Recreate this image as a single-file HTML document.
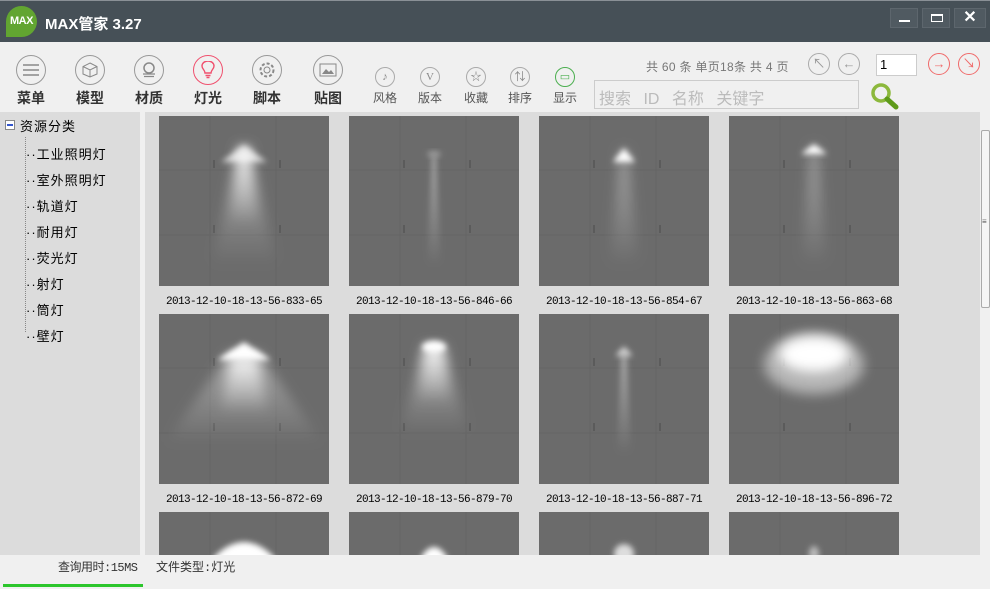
<!DOCTYPE html>
<html><head><meta charset="utf-8">
<style>
*{margin:0;padding:0;box-sizing:border-box}
html,body{width:990px;height:589px;overflow:hidden}
body{background:#f0f0f0;font-family:"Liberation Sans","Noto Sans CJK SC",sans-serif;position:relative}
.title{position:absolute;left:0;top:0;width:990px;height:42px;background:#465057;border-top:1px solid #8a9096}
.logo{position:absolute;left:6px;top:5px;width:31px;height:31px;border-radius:50% 50% 50% 0;background:#62a531;color:#fff;font-weight:bold;font-size:11px;line-height:31px;text-align:center;letter-spacing:-.5px}
.ttext{position:absolute;left:45px;top:12px;color:#fff;font-size:15px;font-weight:bold}
.wb{position:absolute;top:7px;width:28px;height:20px;background:#505a61;border:1px solid #5d666d}
.tool{position:absolute;text-align:center;font-size:14px;font-weight:bold;color:#333}
.tool .c{width:30px;height:30px;border:1.5px solid #999;border-radius:50%;margin:0 auto 3px;display:flex;align-items:center;justify-content:center}
.st{position:absolute;text-align:center;font-size:12px;color:#555}
.st .c{width:20px;height:20px;border:1px solid #aaa;border-radius:50%;margin:0 auto 2px;font-size:11px;line-height:18px;color:#888}
.nav{position:absolute;top:53px;width:22px;height:22px;border:1px solid #aaa;border-radius:50%;font-size:13px;line-height:19px;text-align:center;color:#999}
.left{position:absolute;left:0;top:112px;width:140px;height:443px;background:#dcdcdc}
.tree{position:absolute;font-size:13px;color:#000;font-family:"Liberation Sans","WenQuanYi Zen Hei",sans-serif;letter-spacing:1px}
.main{position:absolute;left:145px;top:112px;width:835px;height:443px;background:#dcdcdc;overflow:hidden}
.th{position:absolute;width:170px;height:170px}
.lb{position:absolute;width:190px;text-align:center;font-size:11px;font-family:"Liberation Mono",monospace;color:#000;letter-spacing:-.6px}
.sb{position:absolute;left:980px;top:112px;width:10px;height:443px;background:#f0f0f0}
</style></head><body>
<svg width="0" height="0" style="position:absolute;left:0;top:0">
<defs>
<filter id="b3" x="-50%" y="-50%" width="200%" height="200%"><feGaussianBlur stdDeviation="3"/></filter>
<filter id="b6" x="-50%" y="-50%" width="200%" height="200%"><feGaussianBlur stdDeviation="6"/></filter>
<linearGradient id="cg" x1="0" y1="0" x2="0" y2="1"><stop offset="0" stop-color="#fff" stop-opacity=".9"/><stop offset="1" stop-color="#fff" stop-opacity="0"/></linearGradient>
<linearGradient id="cf" x1="0" y1="0" x2="0" y2="1"><stop offset="0" stop-color="#fff" stop-opacity=".4"/><stop offset="1" stop-color="#fff" stop-opacity="0"/></linearGradient>
<g id="grid"><rect width="170" height="170" fill="#6b6b6b"/><path d="M0 54H170M0 119H170M51 0V170M117 0V170" stroke="#646464" stroke-width="1"/><path d="M55 44v8M121 44v8M55 109v8M121 109v8" stroke="#444" stroke-width=".8"/></g>
</defs></svg>

<div class="title">
<div class="logo">MAX</div>
<div class="ttext">MAX管家 3.27</div>
<div class="wb" style="left:890px"><div style="position:absolute;left:8px;top:11px;width:11px;height:2px;background:#fff"></div></div>
<div class="wb" style="left:922px"><div style="position:absolute;left:8px;top:5px;width:12px;height:8px;border:1.5px solid #fff;border-top-width:2.5px"></div></div>
<div class="wb" style="left:954px;width:32px;color:#fff;font-size:16px;text-align:center;line-height:18px;font-weight:bold">✕</div>
</div>

<div class="tool" style="left:14px;top:55px;width:34px"><div class="c"><svg width="16" height="12"><path d="M0 1H16M0 6H16M0 11H16" stroke="#888" stroke-width="1.5"/></svg></div>菜单</div>
<div class="tool" style="left:73px;top:55px;width:34px"><div class="c"><svg width="16" height="16"><path d="M8 1L15 4.5V12L8 15L1 12V4.5ZM1 4.5L8 8L15 4.5M8 8V15" stroke="#888" fill="none"/></svg></div>模型</div>
<div class="tool" style="left:132px;top:55px;width:34px"><div class="c"><svg width="16" height="16"><circle cx="8" cy="6" r="5" stroke="#888" fill="none" stroke-width="1.5"/><path d="M2 12H14M3 14.5H13" stroke="#888" stroke-width="1.3"/></svg></div>材质</div>
<div class="tool" style="left:191px;top:55px;width:34px"><div class="c" style="border-color:#f0506e"><svg width="14" height="18"><path d="M4 12C4 9 1 8 1 5A6 5 0 0 1 13 5C13 8 10 9 10 12ZM4.5 14.5H9.5M5.5 16.5H8.5" stroke="#f0506e" fill="none" stroke-width="1.4"/></svg></div>灯光</div>
<div class="tool" style="left:250px;top:55px;width:34px"><div class="c"><svg width="18" height="18"><circle cx="9" cy="9" r="3" stroke="#888" fill="none"/><circle cx="9" cy="9" r="6.5" stroke="#888" fill="none" stroke-dasharray="3 2" stroke-width="2"/></svg></div>脚本</div>
<div class="tool" style="left:311px;top:55px;width:34px"><div class="c"><svg width="18" height="14"><rect x="1" y="1" width="16" height="12" stroke="#888" fill="none"/><path d="M3 11L7 6L10 9L12 7L15 11Z" fill="#888"/></svg></div>贴图</div>

<div class="st" style="left:372px;top:67px;width:26px"><div class="c">♪</div>风格</div>
<div class="st" style="left:417px;top:67px;width:26px"><div class="c" style="font-family:'Liberation Serif'">V</div>版本</div>
<div class="st" style="left:463px;top:67px;width:26px"><div class="c">☆</div>收藏</div>
<div class="st" style="left:507px;top:67px;width:26px"><div class="c">⇅</div>排序</div>
<div class="st" style="left:552px;top:67px;width:26px"><div class="c" style="border-color:#4caf50;color:#4caf50">▭</div>显示</div>

<div style="position:absolute;left:646px;top:58px;font-size:12px;color:#777;letter-spacing:.3px">共 60 条 单页18条 共 4 页</div>
<div class="nav" style="left:808px">↖</div>
<div class="nav" style="left:838px">←</div>
<div style="position:absolute;left:876px;top:54px;width:41px;height:22px;background:#fff;border:1px solid #ccc;font-size:13px;padding:2px 3px">1</div>
<div class="nav" style="left:928px;border-color:#f06a6a;color:#f06a6a">→</div>
<div class="nav" style="left:958px;border-color:#f06a6a;color:#f06a6a">↘</div>
<div style="position:absolute;left:594px;top:80px;width:265px;height:29px;border:1px solid #ccc;font-size:16px;color:#bbb;padding:4px 4px;word-spacing:8px">搜索 ID 名称 关键字</div>
<svg style="position:absolute;left:870px;top:82px" width="30" height="28"><circle cx="11" cy="11" r="8" stroke="#8cb83c" stroke-width="3.5" fill="none"/><path d="M17 17L26 25" stroke="#5e9a1a" stroke-width="5" stroke-linecap="round"/></svg>

<div class="left">
<div style="position:absolute;left:5px;top:8px;width:10px;height:10px;border:1px solid #888;background:#fff"><div style="position:absolute;left:1px;top:3px;width:6px;height:1.5px;background:#3355cc"></div></div>
<div class="tree" style="left:20px;top:4px">资源分类</div>
<div style="position:absolute;left:25px;top:25px;height:195px;border-left:1px dotted #888"></div>
<div class="tree" style="left:26px;top:30px;line-height:26px">
<div>··工业照明灯</div><div>··室外照明灯</div><div>··轨道灯</div><div>··耐用灯</div><div>··荧光灯</div><div>··射灯</div><div>··筒灯</div><div>··壁灯</div>
</div>
</div>

<div class="main">
<svg class="th" style="left:14px;top:4px" viewBox="0 0 170 170"><use href="#grid"/><path d="M80 30L90 30L118 150L52 150Z" fill="url(#cf)" filter="url(#b6)"/><path d="M80 32L90 32L100 110L70 110Z" fill="url(#cg)" filter="url(#b6)"/><path d="M62 46L85 29L108 46Z" fill="#fff" opacity=".7" filter="url(#b3)"/></svg>
<svg class="th" style="left:204px;top:4px" viewBox="0 0 170 170"><use href="#grid"/><path d="M83 38L87 38L92 150L78 150Z" fill="url(#cf)" filter="url(#b3)"/><ellipse cx="85" cy="38" rx="7" ry="3" fill="#999" filter="url(#b3)"/></svg>
<svg class="th" style="left:394px;top:4px" viewBox="0 0 170 170"><use href="#grid"/><path d="M82 34L88 34L100 150L70 150Z" fill="url(#cf)" filter="url(#b6)"/><path d="M74 46L85 32L96 46Z" fill="#fff" filter="url(#b3)"/></svg>
<svg class="th" style="left:584px;top:4px" viewBox="0 0 170 170"><use href="#grid"/><path d="M82 30L88 30L98 150L72 150Z" fill="url(#cf)" filter="url(#b6)"/><path d="M72 38L85 28L98 38Z" fill="#fff" filter="url(#b3)"/></svg>
<div class="lb" style="left:4px;top:184px">2013-12-10-18-13-56-833-65</div>
<div class="lb" style="left:194px;top:184px">2013-12-10-18-13-56-846-66</div>
<div class="lb" style="left:384px;top:184px">2013-12-10-18-13-56-854-67</div>
<div class="lb" style="left:574px;top:184px">2013-12-10-18-13-56-863-68</div>
<svg class="th" style="left:14px;top:202px" viewBox="0 0 170 170"><use href="#grid"/><path d="M70 40L100 40L165 130L5 130Z" fill="url(#cf)" filter="url(#b6)"/><path d="M72 42L98 42L110 100L60 100Z" fill="url(#cg)" filter="url(#b6)"/><path d="M58 46L85 28L112 46Z" fill="#fff" filter="url(#b3)"/></svg>
<svg class="th" style="left:204px;top:202px" viewBox="0 0 170 170"><use href="#grid"/><path d="M75 34L95 34L120 120L50 120Z" fill="url(#cf)" filter="url(#b6)"/><path d="M76 32L94 32L102 90L68 90Z" fill="url(#cg)" filter="url(#b6)"/><ellipse cx="85" cy="33" rx="12" ry="6" fill="#fff" filter="url(#b3)"/></svg>
<svg class="th" style="left:394px;top:202px" viewBox="0 0 170 170"><use href="#grid"/><path d="M82 38L88 38L92 140L78 140Z" fill="url(#cf)" filter="url(#b3)"/><path d="M76 42L85 32L94 42Z" fill="#ccc" filter="url(#b3)"/></svg>
<svg class="th" style="left:584px;top:202px" viewBox="0 0 170 170"><use href="#grid"/><ellipse cx="85" cy="50" rx="50" ry="30" fill="#fff" opacity=".5" filter="url(#b6)"/><ellipse cx="85" cy="40" rx="35" ry="18" fill="#fff" filter="url(#b6)"/></svg>
<div class="lb" style="left:4px;top:382px">2013-12-10-18-13-56-872-69</div>
<div class="lb" style="left:194px;top:382px">2013-12-10-18-13-56-879-70</div>
<div class="lb" style="left:384px;top:382px">2013-12-10-18-13-56-887-71</div>
<div class="lb" style="left:574px;top:382px">2013-12-10-18-13-56-896-72</div>
<svg class="th" style="left:14px;top:400px" viewBox="0 0 170 170"><use href="#grid"/><path d="M55 45Q85 15 115 45L120 60L50 60Z" fill="#fff" filter="url(#b3)"/></svg>
<svg class="th" style="left:204px;top:400px" viewBox="0 0 170 170"><use href="#grid"/><path d="M72 45Q85 25 98 45L100 60L70 60Z" fill="#fff" filter="url(#b3)"/></svg>
<svg class="th" style="left:394px;top:400px" viewBox="0 0 170 170"><use href="#grid"/><ellipse cx="85" cy="42" rx="10" ry="10" fill="#ddd" filter="url(#b3)"/></svg>
<svg class="th" style="left:584px;top:400px" viewBox="0 0 170 170"><use href="#grid"/><ellipse cx="85" cy="42" rx="5" ry="8" fill="#bbb" filter="url(#b3)"/></svg>
</div>

<div class="sb"><div style="position:absolute;left:1px;top:18px;width:9px;height:178px;border:1px solid #aaa;border-radius:2px;background:#f5f5f5"></div><div style="position:absolute;left:2px;top:105px;font-size:8px;color:#555">≡</div></div>

<div style="position:absolute;left:58px;top:558px;font-size:12px;color:#333;font-family:'Liberation Mono','WenQuanYi Zen Hei',monospace;letter-spacing:-.5px">查询用时:15MS</div>
<div style="position:absolute;left:156px;top:558px;font-size:12px;color:#333;font-family:'Liberation Mono','WenQuanYi Zen Hei',monospace">文件类型:灯光</div>
<div style="position:absolute;left:3px;top:584px;width:140px;height:3px;background:#2cc62c"></div>
</body></html>
